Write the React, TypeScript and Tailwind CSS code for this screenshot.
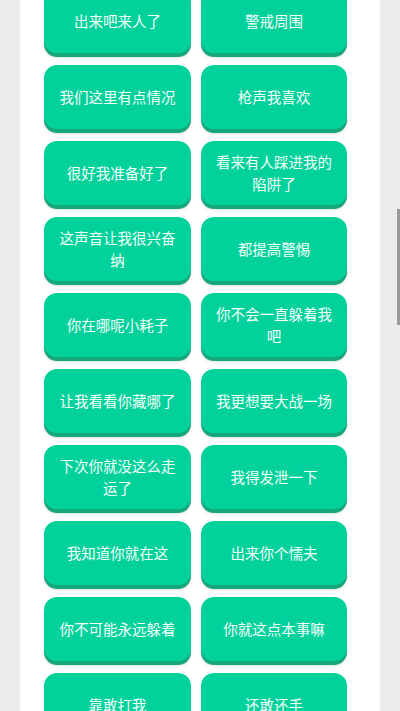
import React from 'react';

const phrases: string[] = [
  '出来吧来人了',
  '警戒周围',
  '我们这里有点情况',
  '枪声我喜欢',
  '很好我准备好了',
  '看来有人踩进我的陷阱了',
  '这声音让我很兴奋纳',
  '都提高警惕',
  '你在哪呢小耗子',
  '你不会一直躲着我吧',
  '让我看看你藏哪了',
  '我更想要大战一场',
  '下次你就没这么走运了',
  '我得发泄一下',
  '我知道你就在这',
  '出来你个懦夫',
  '你不可能永远躲着',
  '你就这点本事嘛',
  '靠敢打我',
  '还敢还手',
];

const SoundButton: React.FC<{ label: string }> = ({ label }) => (
  <button
    type="button"
    className="h-[64px] rounded-[13px] bg-[#02d19c] px-3 text-center text-[14.5px] leading-[22px] text-[#f4fffa] shadow-[0_4px_0_#17a77b,0_5px_3px_rgba(0,0,0,0.12)]"
  >
    {label}
  </button>
);

export default function App() {
  return (
    <div
      className="relative flex h-[711px] justify-center overflow-hidden bg-[#ececec]"
      style={{ fontFamily: '"Noto Sans CJK SC", "Noto Sans", sans-serif' }}
    >
      {/* Panel */}
      <div className="w-[360px] bg-white pl-[24px]">
        <div className="-mt-[11px] grid grid-cols-[147px_146px] gap-x-[10px] gap-y-[12px]">
          {phrases.map((p, i) => (
            <SoundButton key={i} label={p} />
          ))}
        </div>
      </div>

      {/* scrollbar thumb */}
      <div className="absolute right-0 top-[209px] h-[116px] w-[3px] bg-[#9a9a9a]" />
    </div>
  );
}
